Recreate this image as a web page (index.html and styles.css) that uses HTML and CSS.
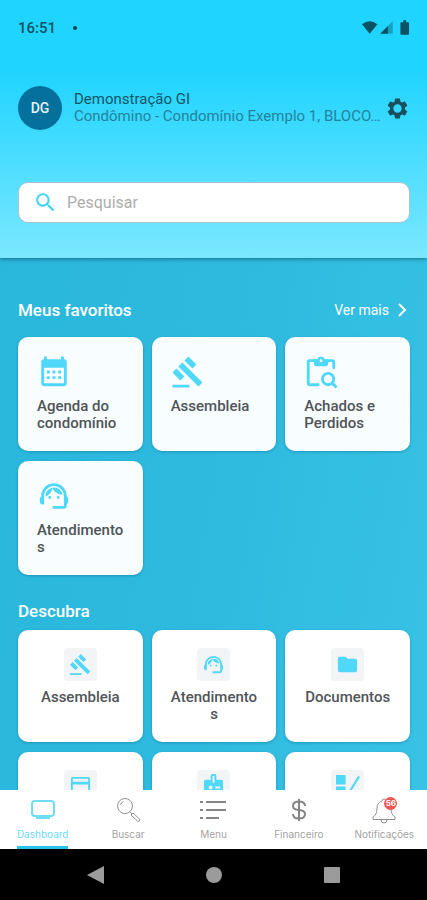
FILE: index.html
```html
<!DOCTYPE html>
<html lang="pt-BR">
<head>
<meta charset="utf-8">
<meta name="viewport" content="width=device-width, initial-scale=1">
<title>Dashboard</title>
<link rel="stylesheet" href="styles.css">
</head>
<body>
<svg class="sprite" aria-hidden="true">
  <symbol id="gavel" viewBox="0 0 24 24"><path d="M1 21h12v2H1v-2zM5.24 8.07l2.83-2.83 14.14 14.14-2.83 2.83L5.24 8.07zM12.32 1l5.66 5.66-2.83 2.83-5.66-5.66L12.32 1zM3.83 9.48l5.66 5.66-2.83 2.83L1 12.31l2.83-2.83z"/></symbol>
  <symbol id="agent" viewBox="0 0 24 24"><path d="M21 12.22C21 6.73 16.74 3 12 3c-4.69 0-9 3.65-9 9.28-.6.34-1 .98-1 1.72v2c0 1.1.9 2 2 2h1v-6.1c0-3.87 3.13-7 7-7s7 3.13 7 7V19h-8v2h8c1.1 0 2-.9 2-2v-1.22c.59-.31 1-.92 1-1.64v-2.3c0-.7-.41-1.31-1-1.62z"/><circle cx="9" cy="13" r="1"/><circle cx="15" cy="13" r="1"/><path d="M18 11.03A6.04 6.04 0 0 0 12.05 6c-3.03 0-6.29 2.51-6.03 6.45a8.075 8.075 0 0 0 4.86-5.89c1.31 2.63 4 4.44 7.12 4.47z"/></symbol>
</svg>

<header class="header">
  <div class="status">
    <span class="clock">16:51</span>
    <span class="dot"></span>
    <svg class="status-icons" viewBox="0 0 50 16" aria-hidden="true">
      <path d="M0 4Q8-2 16 4L8 14z"/>
      <path d="M32 1v13H19z" opacity=".4"/><path d="M27 6v8h-8z"/>
      <path d="M43 0h3v2h2q1 0 1 1v11q0 1-1 1h-7q-1 0-1-1V3q0-1 1-1h2z"/>
    </svg>
  </div>
  <div class="profile">
    <span class="avatar">DG</span>
    <div class="profile-text">
      <p class="name">Demonstração GI</p>
      <p class="unit">Condômino - Condomínio Exemplo 1, BLOCO...</p>
    </div>
    <button class="settings" type="button" aria-label="Configurações">
      <svg viewBox="0 0 24 24"><path d="M19.140 12.940c.04-.3.06-.61.06-.94 0-.32-.02-.64-.07-.94l2.030-1.580c.18-.14.23-.41.12-.61l-1.920-3.320c-.12-.22-.37-.29-.59-.22l-2.390.96c-.5-.38-1.030-.7-1.620-.94l-.36-2.540c-.04-.24-.24-.41-.48-.41h-3.840c-.24 0-.43.17-.47.41l-.36 2.540c-.59.24-1.130.57-1.620.94l-2.390-.96c-.22-.08-.47 0-.59.22L2.740 8.870c-.12.21-.08.47.12.61l2.030 1.580c-.05.3-.09.63-.09.94s.02.64.07.94l-2.030 1.580c-.18.14-.23.41-.12.61l1.920 3.320c.12.22.37.29.59.22l2.390-.96c.5.38 1.030.7 1.620.94l.36 2.540c.05.24.24.41.48.41h3.840c.24 0 .44-.17.47-.41l.36-2.540c.59-.24 1.130-.56 1.620-.94l2.390.96c.22.08.47 0 .59-.22l1.920-3.320c.12-.22.07-.47-.12-.61l-2.010-1.580zM12 16a4 4 0 1 1 0-8 4 4 0 0 1 0 8z"/></svg>
    </button>
  </div>
  <label class="search">
    <svg viewBox="0 0 24 24" aria-hidden="true"><path d="M15.500 14h-.79l-.28-.27C15.410 12.590 16 11.110 16 9.500 16 5.910 13.090 3 9.500 3S3 5.910 3 9.500 5.910 16 9.500 16c1.610 0 3.090-.59 4.230-1.570l.27.28v.79l5 4.990L20.490 19l-4.990-5zm-6 0C7.010 14 5 11.990 5 9.500S7.010 5 9.500 5 14 7.010 14 9.500 11.990 14 9.500 14z"/></svg>
    <input type="search" placeholder="Pesquisar" aria-label="Pesquisar">
  </label>
</header>

<main class="content">
  <section>
    <div class="section-head">
      <h2>Meus favoritos</h2>
      <a class="more" href="#favoritos">Ver mais
        <svg viewBox="0 0 10 16" aria-hidden="true"><path d="M2 2l6 6-6 6"/></svg>
      </a>
    </div>
    <div class="grid" id="favoritos">
      <a class="card favorite" href="#agenda">
        <svg class="icon" viewBox="0 0 24 24"><path fill-rule="evenodd" d="M5 1h2v2h10V1h2v2q2 0 2 2v15q0 2-2 2H5q-2 0-2-2V5q0-2 2-2zM5 9v11h14V9zM7 11h2v2H7zM11 11h2v2h-2zM15 11h2v2h-2zM7 15h2v2H7zM11 15h2v2h-2zM15 15h2v2h-2z"/></svg>
        <span>Agenda do condomínio</span>
      </a>
      <a class="card favorite" href="#assembleia">
        <svg class="icon"><use href="#gavel"/></svg>
        <span>Assembleia</span>
      </a>
      <a class="card favorite" href="#achados">
        <svg class="icon" viewBox="0 0 24 24"><path fill="none" stroke="currentColor" stroke-width="2" stroke-linecap="round" d="M10 21H4q-1 0-1-1V5q0-1 1-1h4M16 4h4q1 0 1 1v4"/><path fill-rule="evenodd" d="M9.200 3a3 3 0 0 1 5.600 0H17v3q0 2-2 2H9Q7 8 7 6V3zM12 3a1 1 0 1 0 0 2 1 1 0 0 0 0-2z"/><circle cx="17" cy="17" r="4" fill="none" stroke="currentColor" stroke-width="2"/><path fill="none" stroke="currentColor" stroke-width="2" d="M19.500 19.500l3.500 3.500"/></svg>
        <span>Achados e Perdidos</span>
      </a>
      <a class="card favorite" href="#atendimentos">
        <svg class="icon"><use href="#agent"/></svg>
        <span>Atendimentos</span>
      </a>
    </div>
  </section>

  <section class="discover">
    <h2>Descubra</h2>
    <div class="grid">
      <a class="card tile" href="#assembleia">
        <span class="tile-icon"><svg><use href="#gavel"/></svg></span>
        <span>Assembleia</span>
      </a>
      <a class="card tile" href="#atendimentos">
        <span class="tile-icon"><svg><use href="#agent"/></svg></span>
        <span>Atendimentos</span>
      </a>
      <a class="card tile" href="#documentos">
        <span class="tile-icon"><svg viewBox="0 0 24 24"><path d="M10 4H4q-2 0-2 2v12q0 2 2 2h16q2 0 2-2V8q0-2-2-2h-8z"/></svg></span>
        <span>Documentos</span>
      </a>
      <a class="card tile" href="#boletos" aria-label="Boletos">
        <span class="tile-icon"><svg viewBox="0 0 24 24"><path fill-rule="evenodd" d="M4 2h16q2 0 2 2v14q0 2-2 2H4q-2 0-2-2V4q0-2 2-2zM4 4v3h16V4zM4 10v8h16v-8z"/></svg></span>
      </a>
      <a class="card tile" href="#identificacao" aria-label="Identificação">
        <span class="tile-icon"><svg viewBox="0 0 24 24"><path fill-rule="evenodd" d="M9 5V1q0-2 2-2h2q2 0 2 2v4h5q2 0 2 2v13q0 2-2 2H4q-2 0-2-2V7q0-2 2-2zM11 1v7h2V1zM9 11a2 2 0 1 0 0 4 2 2 0 0 0 0-4zM14 12v2h5v-2z"/></svg></span>
      </a>
      <a class="card tile" href="#enquetes" aria-label="Enquetes">
        <span class="tile-icon"><svg viewBox="0 0 24 24"><path d="M0 0h10v10H0zM0 12h10v10H0zM23 1l2 1-11 18-2-1z"/></svg></span>
      </a>
    </div>
  </section>
</main>

<nav class="tabs">
  <a class="tab active" href="#dashboard">
    <svg viewBox="0 0 28 28"><rect x="3" y="5" width="22" height="15" rx="3"/><path d="M7 22h14" stroke-width="2"/></svg>
    <span>Dashboard</span>
  </a>
  <a class="tab" href="#buscar">
    <svg viewBox="0 0 28 28"><circle cx="11" cy="10" r="7.500"/><path d="M6.500 9a5 5 0 0 1 3-3.500M16 16l2 2M17 19l2-2 7 6.500q0 2-2 2z"/></svg>
    <span>Buscar</span>
  </a>
  <a class="tab" href="#menu">
    <svg class="bold" viewBox="0 0 28 28"><path d="M1 6h3M1 14h3M1 22h3M7 6h20M7 14h20M7 22h13"/></svg>
    <span>Menu</span>
  </a>
  <a class="tab" href="#financeiro">
    <svg class="bold" viewBox="0 0 28 28"><path d="M14 3v22M20 10q0-4.500-6-4.500T8 10q0 3.500 6 4t6 4q0 4.500-6 4.500T8 18"/></svg>
    <span>Financeiro</span>
  </a>
  <a class="tab" href="#notificacoes">
    <svg viewBox="0 0 28 28"><path d="M14 3a2 2 0 0 1 2 2q5 2 5 7 0 7 4 9v2.500H3V21q4-2 4-9 0-5 5-7a2 2 0 0 1 2-2zM11 24q0 3 3 3t3-3"/></svg>
    <b class="badge">56</b>
    <span>Notificações</span>
  </a>
</nav>

<footer class="system">
  <button type="button" aria-label="Voltar"><svg viewBox="0 0 20 20"><path d="M18 1v18L1 10z"/></svg></button>
  <button type="button" aria-label="Início"><svg viewBox="0 0 20 20"><circle cx="10" cy="10" r="8"/></svg></button>
  <button type="button" aria-label="Recentes"><svg viewBox="0 0 20 20"><rect x="2" y="2" width="16" height="16" rx="1"/></svg></button>
</footer>
</body>
</html>
```
FILE: styles.css
```css
* { box-sizing: border-box; }

body {
  margin: 0;
  height: 100vh;
  display: flex;
  flex-direction: column;
  overflow: hidden;
  font-family: Roboto, "Liberation Sans", sans-serif;
  background: #2db9dd;
}

h2, p { margin: 0; }
a { color: inherit; text-decoration: none; }
button { padding: 0; border: 0; background: none; }
svg { display: block; fill: currentColor; }
.sprite { position: absolute; width: 0; height: 0; }

.header {
  position: relative;
  flex: none;
  padding: 16px 17px 35px 18px;
  background: linear-gradient(#1fd4ff 0, #1fd4ff 27%, #7be7ff 100%);
  box-shadow: 0 1px 4px rgba(0, 60, 80, .6);
}

.status {
  display: flex;
  align-items: center;
  height: 24px;
  color: #0b5363;
}
.clock { font-size: 15px; font-weight: 500; }
.dot { width: 4px; height: 4px; margin-left: 17px; border-radius: 50%; background: #0b4554; }
.status-icons { width: 48px; height: 16px; margin-left: auto; }

.profile {
  display: flex;
  align-items: center;
  margin-top: 46px;
  height: 44px;
}
.avatar {
  flex: none;
  width: 44px;
  height: 44px;
  border-radius: 50%;
  background: #04709b;
  color: #e4f3fa;
  font-size: 14px;
  font-weight: 500;
  line-height: 44px;
  text-align: center;
}
.profile-text { flex: 1; min-width: 0; margin-left: 12px; line-height: 17px; }
.name { font-size: 15px; color: #125566; }
.unit {
  font-size: 15px;
  color: #23839c;
  white-space: nowrap;
  overflow: hidden;
  text-overflow: ellipsis;
}
.settings { flex: none; margin-left: 3px; color: #17505e; }
.settings svg { width: 25px; height: 25px; }

.search {
  display: flex;
  align-items: center;
  height: 41px;
  margin-top: 52px;
  padding: 0 14px;
  border: 1px solid #a9c3ca;
  border-radius: 10px;
  background: #fff;
}
.search svg { flex: none; width: 25px; height: 25px; color: #43d3f5; }
.search input {
  flex: 1;
  min-width: 0;
  margin-left: 9px;
  padding: 0;
  border: 0;
  outline: 0;
  background: none;
  font: 16px Roboto, sans-serif;
}
.search input::placeholder { color: #adadad; }

.content {
  flex: 1;
  min-height: 0;
  overflow: hidden;
  padding: 42px 17px 0 18px;
  background: linear-gradient(100deg, #2ab7dc, #2fbbdf 55%, #38c3e5);
}
h2 { font-size: 17px; font-weight: 500; line-height: 20px; color: #fff; }
.section-head { display: flex; justify-content: space-between; align-items: center; }
.more { display: flex; align-items: center; gap: 8px; padding-right: 3px; font-size: 14px; color: #fff; }
.more svg { width: 10px; height: 16px; fill: none; stroke: currentColor; stroke-width: 2; }
.discover { margin-top: 26px; }

.grid {
  display: grid;
  grid-template-columns: repeat(3, minmax(0, 1fr));
  gap: 10px 9px;
  margin-top: 17px;
}
.discover .grid { margin-top: 9px; }
.card {
  border-radius: 10px;
  background: #fff;
  box-shadow: 0 1px 3px rgba(0, 80, 110, .35);
  color: #505457;
  font-size: 15px;
  font-weight: 500;
  line-height: 17px;
  overflow-wrap: anywhere;
}
.favorite { height: 114px; padding: 18px 19px; background: #f8fdff; }
.icon { width: 34px; height: 34px; margin-bottom: 9px; color: #4fd8f7; }
.favorite span { display: block; }
.tile {
  display: flex;
  flex-direction: column;
  align-items: center;
  height: 112px;
  padding: 18px;
  text-align: center;
}
.tile-icon {
  display: grid;
  place-items: center;
  width: 33px;
  height: 33px;
  margin-bottom: 8px;
  border-radius: 4px;
  background: #f3f4f5;
  color: #4fd8f7;
}
.tile-icon svg { width: 23px; height: 23px; overflow: visible; }

.tabs {
  flex: none;
  display: grid;
  grid-template-columns: repeat(5, minmax(0, 1fr));
  height: 59px;
  background: #fff;
}
.tab {
  position: relative;
  display: flex;
  flex-direction: column;
  align-items: center;
  justify-self: center;
  padding-top: 6px;
  font-family: Inter, sans-serif;
  font-size: 10px;
  line-height: 12px;
  color: #a3a3a3;
}
.tab svg { width: 28px; height: 28px; margin-bottom: 4px; fill: none; stroke: #929292; stroke-width: 1; }
.tab .bold { stroke: #858585; stroke-width: 2; }
.active { border-bottom: 3px solid #27c5e9; color: #6edcf5; }
.tab.active svg { stroke: #6edcf5; stroke-width: 2; }
.badge {
  position: absolute;
  top: 7px;
  left: 50%;
  width: 13px;
  height: 13px;
  border-radius: 50%;
  background: #f05555;
  color: #fff;
  font-size: 8px;
  line-height: 13px;
  text-align: center;
}

.system {
  flex: none;
  display: flex;
  justify-content: center;
  gap: 98px;
  height: 51px;
  background: #000;
}
.system button { color: #9b9b9b; }
.system svg { width: 20px; height: 20px; }
```
